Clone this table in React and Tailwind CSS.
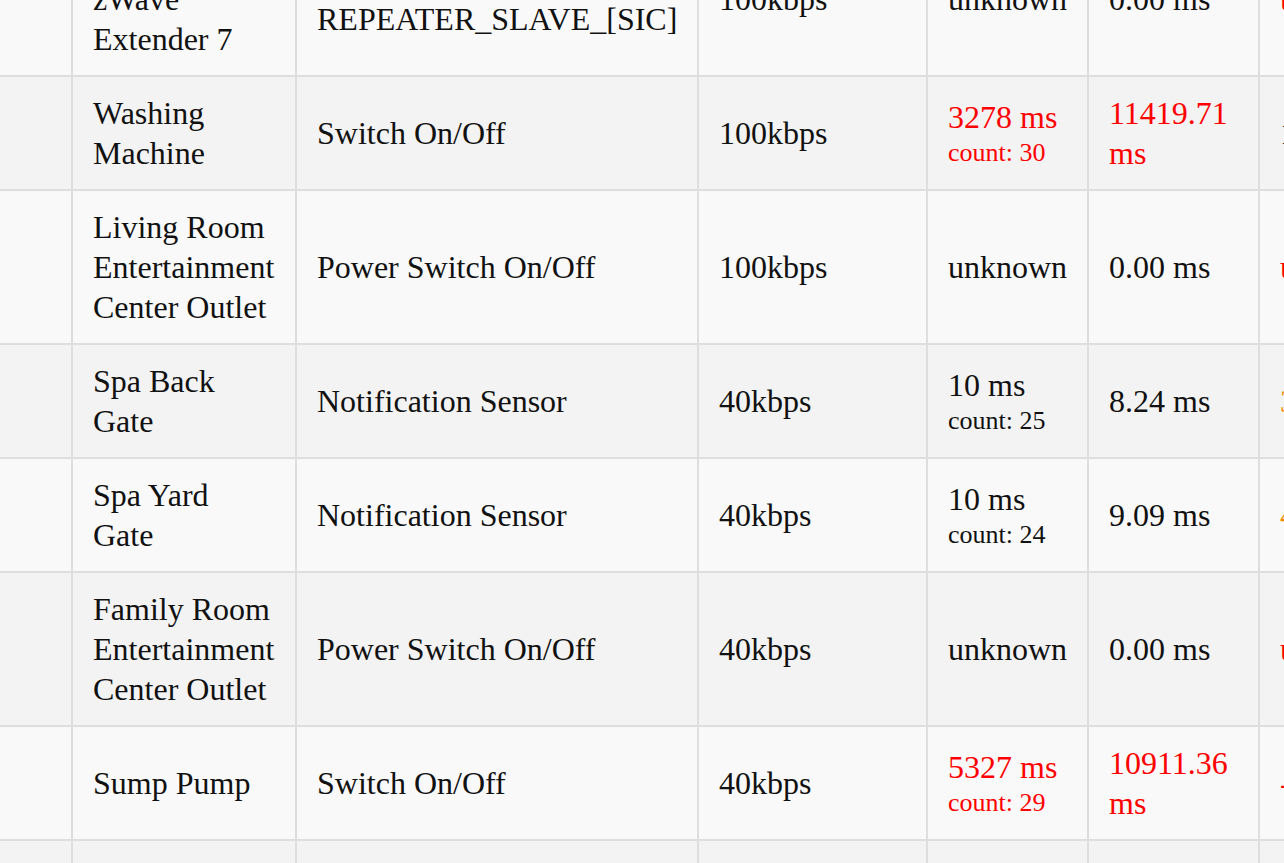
import React from "react";

const RED = "text-[#ff0000]";
const ORANGE = "text-[#f28b00]";

const rows = [
  {
    name: "Basement zWave Extender 7",
    type: ["Z-Wave Repeater", "REPEATER_SLAVE_[SIC]"],
    speed: "100kbps",
    rtt: { value: "unknown" },
    avg: { value: "0.00 ms" },
    last: { value: "unknown", color: RED },
  },
  {
    name: "Washing Machine",
    type: ["Switch On/Off"],
    speed: "100kbps",
    rtt: { value: "3278 ms", count: 30, color: RED },
    avg: { value: "11419.71 ms", color: RED },
    last: { value: "1 min" },
  },
  {
    name: "Living Room Entertainment Center Outlet",
    type: ["Power Switch On/Off"],
    speed: "100kbps",
    rtt: { value: "unknown" },
    avg: { value: "0.00 ms" },
    last: { value: "unknown", color: RED },
  },
  {
    name: "Spa Back Gate",
    type: ["Notification Sensor"],
    speed: "40kbps",
    rtt: { value: "10 ms", count: 25 },
    avg: { value: "8.24 ms" },
    last: { value: "3 hours", color: ORANGE },
  },
  {
    name: "Spa Yard Gate",
    type: ["Notification Sensor"],
    speed: "40kbps",
    rtt: { value: "10 ms", count: 24 },
    avg: { value: "9.09 ms" },
    last: { value: "4 hours", color: ORANGE },
  },
  {
    name: "Family Room Entertainment Center Outlet",
    type: ["Power Switch On/Off"],
    speed: "40kbps",
    rtt: { value: "unknown" },
    avg: { value: "0.00 ms" },
    last: { value: "unknown", color: RED },
  },
  {
    name: "Sump Pump",
    type: ["Switch On/Off"],
    speed: "40kbps",
    rtt: { value: "5327 ms", count: 29, color: RED },
    avg: { value: "10911.36 ms", color: RED },
    last: { value: "-", color: RED },
  },
  {
    name: "Front Door Lock",
    type: ["Door Lock"],
    speed: "40kbps",
    rtt: { value: "12 ms", count: 20 },
    avg: { value: "7.50 ms" },
    last: { value: "2 hours", color: ORANGE },
  },
];

const Cell = ({ bg, children, className = "" }) => (
  <div
    className={`flex items-center border-r-2 border-b-2 border-[#dedede] px-5 py-4 ${bg} ${className}`}
  >
    <div className="min-w-0">{children}</div>
  </div>
);

const Timing = ({ data }) => (
  <div className={data.color || "text-[#111]"}>
    <div>{data.value}</div>
    {data.count !== undefined && (
      <div className="text-[26px] leading-[32px]">count: {data.count}</div>
    )}
  </div>
);

export default function App() {
  return (
    <div className="h-screen w-full overflow-hidden bg-[#f9f9f9] font-['Liberation_Serif',serif] text-[32px] leading-[40px] text-[#111]">
      <div className="-mt-[77px] -ml-px grid w-[1410px] grid-cols-[74px_224px_402px_229px_161px_171px_150px]">
        {rows.map((row, i) => {
          const bg = i % 2 === 0 ? "bg-[#f9f9f9]" : "bg-[#f3f3f3]";
          return (
            <React.Fragment key={i}>
              <Cell bg={bg} />
              <Cell bg={bg}>{row.name}</Cell>
              <Cell bg={bg}>
                {row.type.map((t) => (
                  <div key={t}>{t}</div>
                ))}
              </Cell>
              <Cell bg={bg}>{row.speed}</Cell>
              <Cell bg={bg}>
                <Timing data={row.rtt} />
              </Cell>
              <Cell bg={bg}>
                <Timing data={row.avg} />
              </Cell>
              <Cell bg={bg}>
                <div className={`whitespace-nowrap ${row.last.color || "text-[#111]"}`}>
                  {row.last.value}
                </div>
              </Cell>
            </React.Fragment>
          );
        })}
      </div>
    </div>
  );
}
